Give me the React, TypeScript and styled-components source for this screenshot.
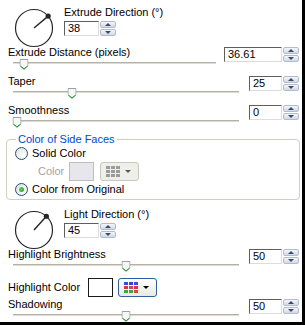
import React from "react";
import styled, { createGlobalStyle, css } from "styled-components";

const GlobalStyle = createGlobalStyle`
  body {
    margin: 0;
    background: #fff;
    font-family: "Liberation Sans", Arial, sans-serif;
    font-size: 11px;
    color: #000;
  }
`;

const Panel = styled.div`
  box-sizing: border-box;
  width: 305px;
  height: 325px;
  padding: 0 2px 0 6px;
  border-right: 3px solid #000;
  border-bottom: 3px solid #000;
  background: #fff;
  overflow: hidden;
  display: flex;
  flex-direction: column;
`;

const Label = styled.div<{ $muted?: boolean }>`
  line-height: 13px;
  height: 13px;
  white-space: nowrap;
  color: ${({ $muted }) => ($muted ? "#a3a3a3" : "#000")};
`;

/* dial + spin box */

const DialRow = styled.div<{ $top: number; $height: number }>`
  display: flex;
  flex: none;
  gap: 10px;
  height: ${({ $height }) => $height}px;
  padding: ${({ $top }) => $top}px 0 0 8px;
  box-sizing: border-box;
`;

const DialSvg = styled.svg`
  flex: none;
  margin-top: 2px;
`;

const DialBody = styled.div`
  display: flex;
  flex-direction: column;
  gap: 2px;
`;

/* spin box */

const SpinWrap = styled.div`
  display: flex;
  gap: 1px;
  align-self: start;
`;

const SpinInput = styled.div<{ $width: number }>`
  box-sizing: border-box;
  width: ${({ $width }) => $width}px;
  height: 15px;
  border: 1px solid;
  border-color: #5e5e5e #dcdcdc #dcdcdc #5e5e5e;
  padding-left: 3px;
  line-height: 13px;
  background: #fff;
`;

const Spinner = styled.div`
  display: flex;
  flex-direction: column;
  gap: 1px;
  width: 16px;
`;

const SpinButton = styled.div<{ $dir: "up" | "down" }>`
  box-sizing: border-box;
  height: 7px;
  border: 1px solid #b3bccd;
  border-radius: 2px;
  background: linear-gradient(#f4f6fb, #d2d8e5);
  display: flex;
  align-items: center;
  justify-content: center;

  &::after {
    content: "";
    border-left: 3px solid transparent;
    border-right: 3px solid transparent;
    ${({ $dir }) =>
      $dir === "up"
        ? css`
            border-bottom: 3px solid #3c4a68;
          `
        : css`
            border-top: 3px solid #3c4a68;
          `}
  }
`;

/* slider rows */

const SliderRow = styled.div<{ $gap: number }>`
  display: grid;
  grid-template-columns: 1fr auto;
  column-gap: ${({ $gap }) => $gap}px;
  flex: none;
  height: 29px;
  padding: 0 1px 0 2px;
`;

const SliderCol = styled.div`
  display: flex;
  flex-direction: column;
  min-width: 0;
`;

const TrackArea = styled.div`
  position: relative;
  height: 16px;
  margin-left: 5px;
`;

const Track = styled.div`
  margin-top: 3px;
  height: 1px;
  border-top: 1px solid #b4b1a5;
  background: #dedcd2;
`;

const ThumbWrap = styled.div`
  position: absolute;
  top: 0;
  width: 9px;
  height: 11px;
  transform: translateX(-50%);
`;

const SpinSlot = styled.div`
  padding-top: 1px;
`;

/* group box */

const GroupBox = styled.fieldset`
  flex: none;
  margin: 0;
  padding: 0 8px 3px 8px;
  border: 1px solid #d0d0bf;
  border-radius: 4px;
  min-width: 0;
`;

const GroupLegend = styled.legend`
  color: #0046d5;
  padding: 0 2px;
  margin-left: 1px;
  line-height: 13px;
`;

const RadioRow = styled.div`
  display: flex;
  align-items: center;
  gap: 4px;
  height: 14px;
`;

const Radio = styled.span<{ $checked?: boolean }>`
  box-sizing: border-box;
  width: 13px;
  height: 13px;
  border-radius: 50%;
  border: 1px solid #1c5180;
  background: radial-gradient(circle at 65% 65%, #fff 0%, #e8e8e2 70%, #d6d5cc 100%);
  display: flex;
  align-items: center;
  justify-content: center;

  &::after {
    content: "";
    display: ${({ $checked }) => ($checked ? "block" : "none")};
    width: 5px;
    height: 5px;
    border-radius: 50%;
    background: radial-gradient(circle at 35% 35%, #5fd35f, #1f9e1f);
  }
`;

const ColorRow = styled.div`
  display: flex;
  align-items: center;
  height: 19px;
  margin: 2px 0 1px;
  padding-left: 23px;
`;

const Swatch = styled.div<{ $disabled?: boolean }>`
  box-sizing: border-box;
  width: 25px;
  height: 19px;
  margin: 0 6px 0 5px;
  border: 1px solid ${({ $disabled }) => ($disabled ? "#bdbdc4" : "#1a1a1a")};
  background: ${({ $disabled }) => ($disabled ? "#e6e6ec" : "#fff")};
`;

const PaletteButton = styled.div<{ $active?: boolean }>`
  box-sizing: border-box;
  width: 39px;
  height: 19px;
  border: 1px solid ${({ $active }) => ($active ? "#2f5f9c" : "#c9c8bd")};
  border-radius: 3px;
  background: ${({ $active }) =>
    $active ? "linear-gradient(#ffffff, #e9e8e2)" : "#efefe9"};
  display: flex;
  align-items: center;
  gap: 5px;
  padding-left: 5px;
`;

const PaletteGrid = styled.div`
  display: grid;
  grid-template-columns: repeat(3, 4px);
  grid-auto-rows: 3px;
  gap: 1px;
`;

const PaletteCell = styled.div<{ $color: string }>`
  background: ${({ $color }) => $color};
`;

const DropArrow = styled.div<{ $active?: boolean }>`
  border-left: 3px solid transparent;
  border-right: 3px solid transparent;
  border-top: 3px solid ${({ $active }) => ($active ? "#000" : "#5a5a5a")};
`;

const HighlightRow = styled.div`
  display: flex;
  align-items: center;
  flex: none;
  height: 21px;
  padding-left: 2px;

  ${Swatch} {
    margin: 0 5px 0 8px;
  }
`;

/* pieces */

const Dial = ({ angle }: { angle: number }) => {
  const cx = 20;
  const cy = 20;
  const r = 18.5;
  const rad = (angle * Math.PI) / 180;
  const x = cx + r * Math.cos(rad);
  const y = cy - r * Math.sin(rad);
  return (
    <DialSvg width="40" height="40" viewBox="0 0 40 40">
      <circle cx={cx} cy={cy} r={r} fill="none" stroke="#262626" strokeWidth="1.2" />
      <line x1={cx} y1={cy} x2={x} y2={y} stroke="#262626" strokeWidth="1.4" />
      <circle cx={x} cy={y} r="2.6" fill="#262626" />
    </DialSvg>
  );
};

const SpinBox = ({ value, width }: { value: string; width: number }) => (
  <SpinWrap>
    <SpinInput $width={width}>{value}</SpinInput>
    <Spinner>
      <SpinButton $dir="up" />
      <SpinButton $dir="down" />
    </Spinner>
  </SpinWrap>
);

const Thumb = ({ pct }: { pct: number }) => (
  <ThumbWrap style={{ left: `calc(4px + ${pct} * (100% - 8px))` }}>
    <svg width="9" height="11" viewBox="0 0 9 11">
      <path d="M0.5 0.5H8.5V7L4.5 10.5L0.5 7Z" fill="#f7f7f4" stroke="#9aa1ab" />
      <path d="M1.3 7.4L4.5 9.8L7.7 7.4" fill="none" stroke="#21a121" />
    </svg>
  </ThumbWrap>
);

const Slider = ({
  label,
  value,
  pct,
  spinWidth,
  gap
}: {
  label: string;
  value: string;
  pct: number;
  spinWidth: number;
  gap: number;
}) => (
  <SliderRow $gap={gap}>
    <SliderCol>
      <Label>{label}</Label>
      <TrackArea>
        <Track />
        <Thumb pct={pct} />
      </TrackArea>
    </SliderCol>
    <SpinSlot>
      <SpinBox value={value} width={spinWidth} />
    </SpinSlot>
  </SliderRow>
);

const grayCells = Array(9).fill("#9b9b9b");
const colorCells = [
  "#2f4fe0", "#3b3be8", "#5a3ad8",
  "#e03434", "#d23a8a", "#e03434",
  "#2fae3a", "#2fae3a", "#e04040"
];

const Palette = ({ active }: { active?: boolean }) => (
  <PaletteButton $active={active}>
    <PaletteGrid>
      {(active ? colorCells : grayCells).map((c, i) => (
        <PaletteCell key={i} $color={c} />
      ))}
    </PaletteGrid>
    <DropArrow $active={active} />
  </PaletteButton>
);

const App = () => {
  return (
    <>
      <GlobalStyle />
      <Panel>
        <DialRow $top={6} $height={46}>
          <Dial angle={40} />
          <DialBody>
            <Label>Extrude Direction (°)</Label>
            <SpinBox value="38" width={35} />
          </DialBody>
        </DialRow>

        <Slider label="Extrude Distance (pixels)" value="36.61" pct={0.037} spinWidth={58} gap={8} />
        <Slider label="Taper" value="25" pct={0.25} spinWidth={33} gap={10} />
        <Slider label="Smoothness" value="0" pct={0} spinWidth={33} gap={10} />

        <GroupBox>
          <GroupLegend>Color of Side Faces</GroupLegend>
          <RadioRow>
            <Radio />
            <span>Solid Color</span>
          </RadioRow>
          <ColorRow>
            <Label $muted>Color</Label>
            <Swatch $disabled />
            <Palette />
          </ColorRow>
          <RadioRow>
            <Radio $checked />
            <span>Color from Original</span>
          </RadioRow>
        </GroupBox>

        <DialRow $top={8} $height={48}>
          <Dial angle={48} />
          <DialBody>
            <Label>Light Direction (°)</Label>
            <SpinBox value="45" width={35} />
          </DialBody>
        </DialRow>

        <Slider label="Highlight Brightness" value="50" pct={0.5} spinWidth={33} gap={10} />

        <HighlightRow>
          <Label>Highlight Color</Label>
          <Swatch />
          <Palette active />
        </HighlightRow>

        <Slider label="Shadowing" value="50" pct={0.5} spinWidth={33} gap={10} />
      </Panel>
    </>
  );
};

export default App;
